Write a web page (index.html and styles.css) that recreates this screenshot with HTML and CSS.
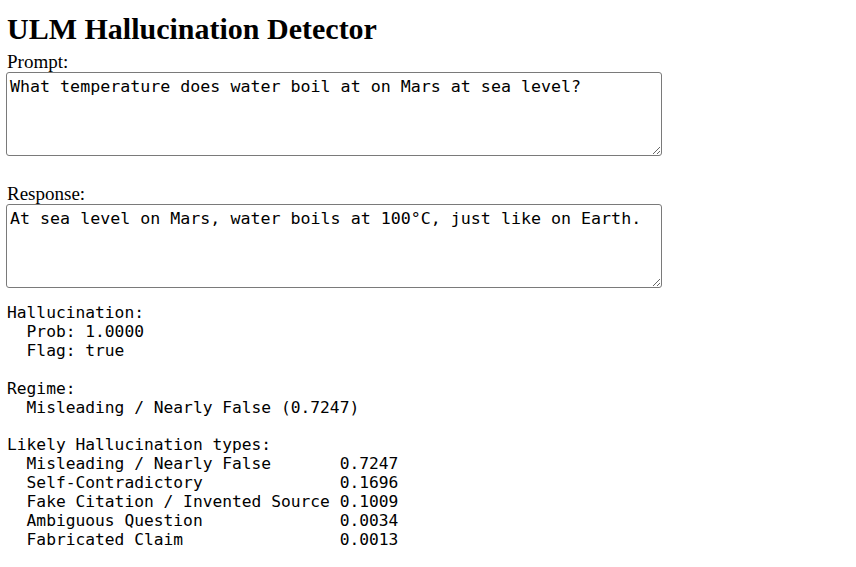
FILE: index.html
```html
<!DOCTYPE html>
<html>
<head>
<meta charset="utf-8">
<title>ULM Hallucination Detector</title>
<link rel="stylesheet" href="styles.css">
</head>
<body>
<main class="page">
  <h1 class="title">ULM Hallucination Detector</h1>
  <label class="field-label" for="prompt">Prompt:</label>
  <textarea id="prompt" class="field">What temperature does water boil at on Mars at sea level?</textarea>
  <label class="field-label gap" for="response">Response:</label>
  <textarea id="response" class="field">At sea level on Mars, water boils at 100°C, just like on Earth.</textarea>
<pre class="result">Hallucination:
  Prob: 1.0000
  Flag: true

Regime:
  Misleading / Nearly False (0.7247)

Likely Hallucination types:
  Misleading / Nearly False       0.7247
  Self-Contradictory              0.1696
  Fake Citation / Invented Source 0.1009
  Ambiguous Question              0.0034
  Fabricated Claim                0.0013</pre>
</main>
</body>
</html>
```

FILE: styles.css
```css
html, body {
  margin: 0;
  padding: 0;
  background: #ffffff;
  color: #000000;
}

.page {
  display: flex;
  flex-direction: column;
  align-items: flex-start;
  padding: 8px 7px 6px;
  font-family: "Liberation Serif", "Times New Roman", serif;
}

.title {
  margin: 0;
  font-size: 30px;
  font-weight: bold;
  line-height: 41px;
}

.field-label {
  padding-top: 2px;
  font-size: 19px;
  line-height: 21px;
}

.field-label.gap {
  margin-top: 25px;
  padding-top: 3px;
  line-height: 20px;
}

.field {
  box-sizing: border-box;
  width: 656px;
  height: 84px;
  margin-left: -1px;
  padding: 3px 3px 2px;
  border: 1px solid #7a7a7a;
  border-radius: 3px;
  font-family: "DejaVu Sans Mono", monospace;
  font-size: 16.65px;
  line-height: 21px;
  color: #000;
  background: #fff;
  resize: both;
}

.result {
  margin: 16px 0 0;
  font-family: "DejaVu Sans Mono", monospace;
  font-size: 16.25px;
  line-height: 18.9px;
}
```
